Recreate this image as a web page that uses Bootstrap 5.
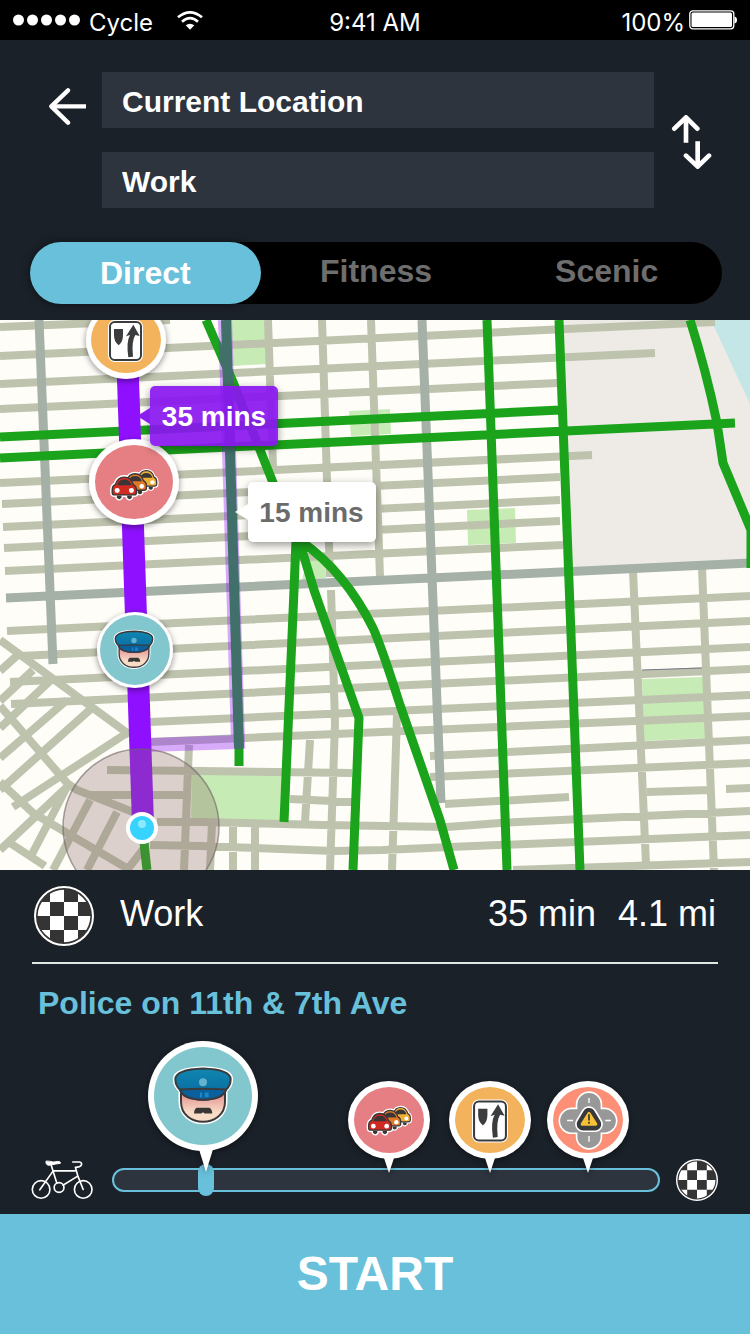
<!DOCTYPE html>
<html lang="en">
<head>
<meta charset="utf-8">
<meta name="viewport" content="width=device-width, initial-scale=1">
<title>Cycle route</title>
<link href="https://cdn.jsdelivr.net/npm/bootstrap@5.3.0/dist/css/bootstrap.min.css" rel="stylesheet">
<style>
:root { --night: #1b2129; --field: #2d343e; --sky: #68c0da; }
body { background: var(--night); color: #fff; font-family: "Liberation Sans", Arial, sans-serif; }
svg { display: block; flex-shrink: 0; }
.status { height: 40px; background: #000; font: 24px/38px Inter, sans-serif; padding: 4px 13px 0; }
.status svg { margin-bottom: 6px; }
.side { width: 102px; }
.side-end { width: 96px; }
.place { height: 56px; background: var(--field); color: #fff; font-size: 30px; font-weight: 700; padding: 4px 20px 0; }
.place:focus { background: var(--field); color: #fff; }
.fields { gap: 24px; }
.search { padding-top: 32px; }
.modes { margin: 34px 28px 16px 30px; background: #000; border-radius: 31px; }
.mode { height: 62px; border-radius: 31px; color: #6e6e6e; font-size: 32px; line-height: 58px; font-weight: 700; text-align: center; cursor: pointer; }
.btn-check:checked + .mode { background: var(--sky); color: #fff; line-height: 62px; box-shadow: 0 0 8px rgba(0,0,0,.5); }
.map { min-height: 360px; background: #fffdf8; }
.eta { width: 128px; height: 60px; border-radius: 5px; font-size: 28px; line-height: 61px; font-weight: 700; text-align: center; box-shadow: 0 3px 8px rgba(0,0,0,.4); }
.eta::before { content: ""; position: absolute; right: 100%; top: 22px; border: solid transparent; border-width: 8px 13px 8px 0; border-right-color: inherit; }
.eta-long { left: 20%; top: 12%; background: rgba(138,22,240,.92); color: #fff; border-color: #8a1df0; }
.eta-short { left: 33%; top: 29.5%; background: #fff; color: #6b6b6b; border-color: #fff; }
.trip { height: 92px; padding: 0 34px; font-size: 36px; line-height: 54px; }
.trip-name { margin-left: 26px; }
.trip-gap { gap: 22px; }
.rule { height: 2px; margin: 0 32px; background: #e3e7e4; }
.alert-line { margin: 20px 38px 0; font-size: 32px; line-height: 38px; font-weight: 700; color: var(--sky); }
.progress-row { margin: 137px 32px 13px 31px; }
.rail { height: 32px; margin: 0 16px 0 19px; }
.pin { bottom: 23px; transform: translateX(-50%); filter: drop-shadow(0 2px 3px rgba(0,0,0,.4)); }
.ride { height: 32px; }
.ride::-webkit-slider-runnable-track { height: 24px; background: var(--field); border: 2px solid var(--sky); border-radius: 12px; }
.ride::-webkit-slider-thumb { width: 16px; height: 32px; margin-top: -6px; background: var(--sky); border-radius: 8px; box-shadow: none; }
.ride::-moz-range-track { height: 20px; background: var(--field); border: 2px solid var(--sky); border-radius: 12px; }
.ride::-moz-range-thumb { width: 16px; height: 32px; background: var(--sky); border-radius: 8px; }
.go { height: 120px; background: var(--sky); color: #fff; font-size: 48px; font-weight: 700; }
.go:hover { background: #5bb4cf; color: #fff; }
.tan { stroke: #bec3ae; stroke-width: 8; }
.avenue { stroke: #a5b1a7; stroke-width: 9; }
.bike-lane { stroke: #1ba31b; stroke-width: 9; }
.park { fill: #c6ebb4; }
</style>
</head>
<body class="d-flex flex-column min-vh-100">

<svg width="0" height="0" class="position-absolute" aria-hidden="true">
  <defs>
    <linearGradient id="cap" x1="0" y1="0" x2="0" y2="1"><stop offset="0" stop-color="#1186b0"/><stop offset="1" stop-color="#0668a0"/></linearGradient>
    <linearGradient id="skin" x1="0" y1="0" x2="0" y2="1"><stop offset=".2" stop-color="#e79c9a"/><stop offset=".7" stop-color="#f7dcc6"/></linearGradient>
    <clipPath id="disc"><circle cx="90" cy="90" r="79"/></clipPath>
    <path id="body" d="M203 228Q203 216 212 213Q218 192 237 192Q256 192 262 213Q271 217 271 228V236Q271 242 264 242H210Q203 242 203 236Z"/>
    <g id="trim">
      <use href="#body" fill="none" stroke="#3b3636" stroke-width="4"/>
      <path d="M217 215Q221 199 237 199Q253 199 257 215Z" fill="#3b3636"/>
      <circle cx="217" cy="230" r="7" fill="#fff"/><circle cx="257" cy="230" r="7" fill="#fff"/>
      <path d="M216 244h13v6q-6 8-13 0zM245 244h13v6q-6 8-13 0z" fill="#3b3636"/>
    </g>
    <g id="halo"><use href="#body" stroke="#fff" stroke-width="12" fill="#fff"/><path d="M216 244h13v6q-6 8-13 0zM245 244h13v6q-6 8-13 0z" fill="#fff" stroke="#fff" stroke-width="8"/></g>
  </defs>
  <symbol id="cars" viewBox="192 158 150 104">
    <g transform="translate(95 9) scale(.86)"><use href="#halo"/></g>
    <g transform="translate(47 4) scale(.93)"><use href="#halo"/></g>
    <use href="#halo"/>
    <g transform="translate(95 9) scale(.86)"><use href="#body" fill="#efae35"/><use href="#trim"/></g>
    <g transform="translate(47 4) scale(.93)"><use href="#body" fill="#df7a28"/><use href="#trim"/></g>
    <use href="#body" fill="#d02b23"/><use href="#trim"/>
  </symbol>
  <symbol id="sign" viewBox="0 0 105 126">
    <rect x="0" y="0" width="105" height="126" rx="20" fill="#fff"/>
    <rect x="6" y="6" width="93" height="114" rx="14" fill="#fff" stroke="#3a3c3e" stroke-width="6"/>
    <path d="M18 27H45V45Q45 66 32 76Q18 66 18 45Z" fill="#3a3c3e"/>
    <path d="M76 14L95 48L82 45Q70 62 75 110L61 112Q54 66 66 45L54 49Z" fill="#3a3c3e"/>
  </symbol>
  <symbol id="police" viewBox="515 590 186 182">
    <path d="M524 632Q524 603 608 600Q692 603 692 632Q692 652 675 666V700C675 740 641 761 608 761S541 740 541 700V666Q524 652 524 632Z" fill="#fff" stroke="#fff" stroke-width="13"/>
    <path d="M542 665V700C542 740 575 760 608 760S674 740 674 700V665Z" fill="url(#skin)" stroke="#3b3a3c" stroke-width="6"/>
    <path d="M525 632Q526 603 608 600Q690 603 691 632Q691 651 677 664Q670 692 608 694Q546 692 539 664Q525 651 525 632Z" fill="url(#cap)" stroke="#3b3a3c" stroke-width="6"/>
    <path d="M539 663Q608 658 677 663Q668 692 608 694Q548 692 539 663Z" fill="#0a5f9d" stroke="#3b3a3c" stroke-width="6"/>
    <path d="M599 672h6v15h-6zM613 672h12v14h-12z" fill="#1d86c4"/>
    <circle cx="608" cy="641" r="12" fill="#63b3cf"/>
    <path d="M589 718H627Q635 722 636 735H613L608 731L603 735H581Q582 721 589 718Z" fill="#3b3636"/>
  </symbol>
  <symbol id="hazard" viewBox="92 120 186 184">
    <g stroke="#fff" stroke-width="10"><rect x="153" y="129" width="70" height="166" rx="35"/><rect x="101" y="178" width="168" height="70" rx="35"/></g>
    <g fill="#989898"><rect x="153" y="129" width="70" height="166" rx="35"/><rect x="101" y="178" width="168" height="70" rx="35"/></g>
    <path d="M188 144v15M188 259v17M122 212h18M237 212h17" stroke="#fff" stroke-width="4"/>
    <g stroke-linejoin="round"><path d="M188 193L206 223H170Z" fill="#fff" stroke="#fff" stroke-width="48"/><path d="M188 193L206 223H170Z" fill="#37393b" stroke="#37393b" stroke-width="38"/><path d="M188 191L208 223H168Z" fill="#f8c036" stroke="#f8c036" stroke-width="10"/></g>
    <path d="M188 193V212M188 216V222" stroke="#37393b" stroke-width="5"/>
  </symbol>
  <symbol id="finish" viewBox="0 0 180 180">
    <circle cx="90" cy="90" r="87" fill="#343434" stroke="#fff" stroke-width="6"/>
    <path clip-path="url(#disc)" fill="#fff" d="M48 6h42v42h-42zM132 6h42v42h-42zM6 48h42v42h-42zM90 48h42v42h-42zM48 90h42v42h-42zM132 90h42v42h-42zM6 132h42v42h-42zM90 132h42v42h-42z"/>
  </symbol>
</svg>

<div class="status row g-0">
  <div class="col d-flex align-items-center">
    <svg width="68" height="12" viewBox="0 0 68 12" fill="#fff" aria-hidden="true"><circle cx="5.500" cy="6" r="5.500"/><circle cx="19.500" cy="6" r="5.500"/><circle cx="33.500" cy="6" r="5.500"/><circle cx="47.500" cy="6" r="5.500"/><circle cx="61.500" cy="6" r="5.500"/></svg>
    <span class="ms-2">Cycle</span>
    <svg class="ms-4" width="26" height="19" viewBox="0 0 78 57" fill="none" stroke="#fff" stroke-width="8" aria-hidden="true"><path d="M3 19Q39-11 75 19M15 32Q39 11 63 32"/><path d="M26 43Q39 33 52 43L39 56Z" fill="#fff" stroke="none"/></svg>
  </div>
  <div class="col-auto">9:41 AM</div>
  <div class="col d-flex align-items-center justify-content-end">
    <span class="me-1">100%</span>
    <svg width="48" height="20" viewBox="0 0 48 20" fill="#fff" aria-hidden="true"><rect x=".8" y=".8" width="44" height="18" rx="3" fill="none" stroke="#fff" stroke-width="1.300"/><rect x="2.500" y="2.500" width="40.500" height="14.500" rx="1.500"/><path d="M45.500 6.500Q48 7 48 10T45.500 13.500Z"/></svg>
  </div>
</div>

<header>
  <div class="search d-flex">
    <div class="side d-flex justify-content-end">
      <button type="button" class="btn border-0 p-0 me-3 mt-3 align-self-start" aria-label="Back"><svg width="37" height="37" viewBox="0 0 111 111" fill="none" stroke="#fff" stroke-width="13"><path d="M6 55H111" /><path d="M57 7L7 55L57 104" stroke-linecap="round" stroke-linejoin="round"/></svg></button>
    </div>
    <div class="fields d-flex flex-column flex-fill">
      <input class="place form-control border-0 rounded-0 shadow-none" type="text" aria-label="From" value="Current Location">
      <input class="place form-control border-0 rounded-0 shadow-none" type="text" aria-label="To" value="Work">
    </div>
    <div class="side-end d-flex align-items-center">
      <button type="button" class="btn border-0 p-0 ms-3 mt-1" aria-label="Swap places"><svg width="42" height="54" viewBox="-4 0 122 162" fill="none" stroke="#fff" stroke-width="14" stroke-linejoin="round"><path d="M42 8V83M77 79V155"/><path d="M7 41L42 7L76 41M42 122L77 155L111 122" stroke-linecap="round"/></svg></button>
    </div>
  </div>
  <div class="modes row g-0" role="radiogroup" aria-label="Route type">
    <div class="col"><input class="btn-check" type="radio" name="mode" id="direct" checked><label class="mode d-block" for="direct">Direct</label></div>
    <div class="col"><input class="btn-check" type="radio" name="mode" id="fitness"><label class="mode d-block" for="fitness">Fitness</label></div>
    <div class="col"><input class="btn-check" type="radio" name="mode" id="scenic"><label class="mode d-block" for="scenic">Scenic</label></div>
  </div>
</header>

<main class="map flex-fill position-relative overflow-hidden">
  <svg class="position-absolute top-0 start-0 w-100 h-100" viewBox="0 320 750 550" preserveAspectRatio="xMidYMid slice" fill="none" role="img" aria-label="Route map">
    <defs><filter id="lift" x="-20%" y="-20%" width="140%" height="150%"><feDropShadow dx="0" dy="2" stdDeviation="3" flood-opacity=".45"/></filter></defs>
    <!-- land and water -->
    <path fill="#eeebe7" d="M559 320H712L750 402V563L568 571Z"/>
    <path fill="#c5e6e7" d="M711 320H750V404Z"/>
    <path class="park" d="M229 320H265L266 364L232 366ZM349 411L390 409L391 434L351 436ZM467 510L515 508L516 543L468 545ZM308 555L325 555L326 578L302 580ZM642 679L703 677L706 738L644 741ZM192 772H284V822H191Z"/>
    <!-- local streets -->
    <path class="tan" d="M0 327L170 320M0 356L715 322M0 384L655 353M0 409L558 383M0 483L592 455M2 504L560 477M3 527L560 500M4 548L560 521M5 571L563 545
      M7 631L750 596M20 656L750 621M10 682L750 647M11 704L750 669M150 722L750 695M150 742L750 716M430 756L750 740M430 777L750 763M445 804L569 797M647 792L710 790M726 789L750 788
      M157 822L200 822L323 825L447 827L500 823L750 811M150 845L200 846L333 851L383 850L450 847L750 835M513 870L750 862M107 770L200 771L352 773M90 795H183M290 799L352 802
      M268 320L273 467M322 320L330 577M371 320L380 577M331 590L335 723L330 870M633 571L646 864M702 568L714 870M397 715L392 870M310 740L305 822M189 745L184 870M212 822L210 870M233 822V870M255 822V870"/>
    <path class="tan" d="M0 640L130 735M0 706L67 783L77 790L138 814M0 782L33 813L67 833L130 870M0 671L20 653M0 701L33 670M0 728L53 678M0 758L67 700M0 790L93 707M13 807L127 733M0 850L67 787M30 858L67 787M53 870L90 800M87 870L117 812M127 870L145 847M10 843L45 866"/>
    <path d="M642 670L702 668" stroke="#777786"/>
    <!-- avenues -->
    <path class="avenue" d="M6 598L750 563M39 320L53 664M422 320L432 577L441 803"/>
    <!-- streets with a cycle lane -->
    <path class="bike-lane" d="M0 437L560 410M0 458L735 423M487 320L507 870M559 320L580 870M206 320L233 382L297 543M296 540L294 590L284 822M299 540L314 590L359 718L353 870M302 542Q345 572 373 628Q382 648 400 705L440 820L454 870M690 320Q706 370 717 423L723 463L751 530V568M239 740V766M143 825Q144 848 147 870"/>
    <!-- alternative route -->
    <path d="M225 320L238 742L148 745" stroke="#8f10ff" stroke-opacity=".35" stroke-width="14"/>
    <path d="M226 320L239 748" stroke="#41706a" stroke-width="10"/>
    <!-- chosen route -->
    <path d="M126 320L143 824" stroke="#8f10ff" stroke-width="22"/>
    <circle cx="141" cy="827" r="78" fill="#8a6a68" fill-opacity=".3" stroke="#6b6262" stroke-opacity=".6" stroke-width="1.500"/>
    <circle cx="142" cy="828" r="16" fill="#fff"/><circle cx="142" cy="828" r="12" fill="#36d3ff"/><circle cx="142" cy="824" r="4" fill="#8aeaff"/>
    <!-- reports on the way -->
    <g filter="url(#lift)" fill="#fff"><ellipse cx="126" cy="340" rx="40" ry="39"/><ellipse cx="134" cy="482" rx="45" ry="43"/><circle cx="135" cy="650" r="38"/></g>
    <ellipse cx="126" cy="340" rx="35" ry="33" fill="#f3b35c"/><use href="#sign" x="108" y="320" width="35" height="42"/>
    <ellipse cx="134" cy="482" rx="39" ry="37" fill="#e57f83"/><use href="#cars" x="108" y="465" width="54" height="37"/>
    <circle cx="135" cy="650" r="35" fill="#82c6ce"/><use href="#police" x="113" y="629" width="42" height="41"/>
  </svg>
  <div class="eta eta-long position-absolute">35 mins</div>
  <div class="eta eta-short position-absolute">15 mins</div>
</main>

<section>
  <div class="trip d-flex align-items-center">
    <svg width="60" height="60" aria-hidden="true"><use href="#finish"/></svg>
    <span class="trip-name me-auto pb-1">Work</span>
    <span class="trip-gap d-flex pb-1"><span>35 min</span><span>4.1 mi</span></span>
  </div>
  <div class="rule"></div>
  <p class="alert-line">Police on 11th &amp; 7th Ave</p>
  <div class="progress-row d-flex align-items-center">
    <svg width="62" height="40" viewBox="90 865 190 120" fill="none" stroke="#fff" stroke-width="5" stroke-linecap="round" stroke-linejoin="round" aria-hidden="true">
      <circle cx="121" cy="954" r="27"/><circle cx="250" cy="954" r="27"/><circle cx="176" cy="948" r="15"/>
      <path d="M136 868Q134 879 146 880L166 876L180 874Q182 868 172 868Q158 872 148 868Z" fill="#fff" stroke-width="3"/>
      <path d="M152 880L169 934M158 897H228M158 897L117 955M232 914L188 941M218 870H238Q248 872 244 880Q240 886 226 886L234 914L250 954"/>
    </svg>
    <div class="rail position-relative flex-fill">
      <input class="ride form-range d-block w-100 p-0" type="range" min="0" max="1000" value="159" aria-label="Position on route">
      <svg class="pin position-absolute" style="left:16.6%" width="110" height="132" viewBox="0 0 110 132" aria-hidden="true"><path d="M50 105H66L58 131Z" fill="#fff"/><circle cx="55" cy="55" r="55" fill="#fff"/><circle cx="55" cy="55" r="49" fill="#82c6ce"/><use href="#police" x="24" y="24" width="62" height="61"/></svg>
      <svg class="pin position-absolute" style="left:50.5%" width="82" height="92" viewBox="0 0 82 92" aria-hidden="true"><path d="M35 74H47L41 92Z" fill="#fff"/><ellipse cx="41" cy="39" rx="41" ry="39" fill="#fff"/><ellipse cx="41" cy="39" rx="35" ry="33" fill="#e57f83"/><use href="#cars" x="17" y="21" width="50" height="35"/></svg>
      <svg class="pin position-absolute" style="left:68.9%" width="82" height="92" viewBox="0 0 82 92" aria-hidden="true"><path d="M35 74H47L41 92Z" fill="#fff"/><ellipse cx="41" cy="39" rx="41" ry="39" fill="#fff"/><ellipse cx="41" cy="39" rx="35" ry="33" fill="#f3b35c"/><use href="#sign" x="23" y="18" width="36" height="44"/></svg>
      <svg class="pin position-absolute" style="left:86.9%" width="82" height="92" viewBox="0 0 82 92" aria-hidden="true"><path d="M35 74H47L41 92Z" fill="#fff"/><ellipse cx="41" cy="39" rx="41" ry="39" fill="#fff"/><ellipse cx="41" cy="39" rx="35" ry="33" fill="#fc8f75"/><use href="#hazard" x="10" y="9" width="62" height="61"/></svg>
    </div>
    <svg width="42" height="42" aria-hidden="true"><use href="#finish"/></svg>
  </div>
</section>

<button type="button" class="go btn border-0 rounded-0 w-100 p-0">START</button>

<script src="https://cdn.jsdelivr.net/npm/bootstrap@5.3.0/dist/js/bootstrap.bundle.min.js"></script>
</body>
</html>
